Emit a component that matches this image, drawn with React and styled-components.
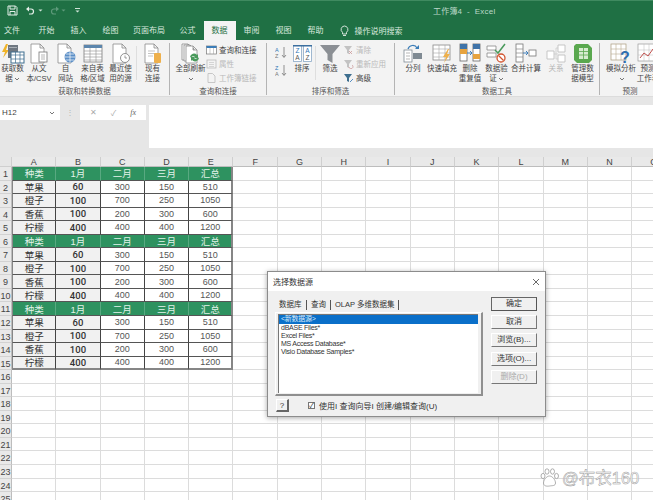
import React from "react";
import styled, { createGlobalStyle } from "styled-components";

const GlobalStyle = createGlobalStyle`
  html, body { margin: 0; padding: 0; height: 100%; overflow: hidden; background: #fff; }
  body { font-family: "Liberation Sans", "Noto Sans CJK SC", sans-serif; }
  * { box-sizing: border-box; }
`;

const GREEN = "#1f7044";
const COLUMNS = "ABCDEFGHIJKLMNO".split("");
const FRUITS = [
  ["苹果", "60", "300", "150", "510"],
  ["橙子", "100", "700", "250", "1050"],
  ["香蕉", "100", "200", "300", "600"],
  ["柠檬", "400", "400", "400", "1200"],
];
const HEADER = ["种类", "1月", "二月", "三月", "汇总"];
const TABLE = [HEADER, ...FRUITS, HEADER, ...FRUITS, HEADER, ...FRUITS];

const Page = styled.div`
  position: relative;
  width: 653px;
  height: 500px;
  overflow: hidden;
  display: flex;
  flex-direction: column;
  background: #fff;
  & > * { flex: none; }
`;

const TitleBar = styled.div`
  height: 20px;
  background: ${GREEN};
  border-top: 1px solid #3f8a60;
  display: flex;
  align-items: center;
  padding-left: 7px;
  color: #cfe3d7;
`;

const Quick = styled.span`
  display: flex;
  flex-direction: column;
  align-items: center;
  gap: 1px;
  margin-left: ${(p) => p.$ml || 0}px;
`;

const QuickBar = styled.span`
  width: 5px;
  height: 1px;
  background: #cfe3d7;
`;

const DocTitle = styled.div`
  margin-left: 353px;
  font-size: 8px;
  color: #bcd8c8;
  letter-spacing: 0.2px;
  white-space: pre;
`;

const TabRow = styled.div`
  height: 20px;
  background: ${GREEN};
  display: flex;
  align-items: flex-end;
  padding-left: 4px;
`;

const Tab = styled.div`
  height: 19px;
  line-height: 19px;
  padding: 0 ${(p) => p.$pad || 8}px;
  font-size: 8px;
  white-space: nowrap;
  color: ${(p) => (p.$active ? GREEN : "#d9e9df")};
  background: ${(p) => (p.$active ? "#f3f3f3" : "transparent")};
  &:first-child { padding: 0 10.5px 0 0; }
`;

const SearchTab = styled.div`
  height: 19px;
  margin-left: 8px;
  display: flex;
  align-items: center;
  gap: 6px;
  font-size: 8px;
  color: #d9e9df;
`;

const Ribbon = styled.div`
  height: 57px;
  background: #f3f3f3;
  display: flex;
  color: #444;
  border-bottom: 1px solid #dcdcdc;
`;

const Group = styled.div`
  width: ${(p) => p.$w}px;
  flex: none;
  display: flex;
  flex-direction: column;
  border-right: 1px solid #b4b4b4;
  margin: 3px 0 1px;
  &:last-child { border-right: none; }
`;

const GroupBody = styled.div`
  flex: 1;
  display: flex;
  padding-left: ${(p) => p.$pad || 0}px;
`;

const GroupLabel = styled.div`
  height: 10px;
  line-height: 14px;
  font-size: 7.5px;
  text-align: center;
  color: #555;
`;

const Tool = styled.div`
  width: ${(p) => p.$w}px;
  flex: none;
  display: flex;
  flex-direction: column;
  align-items: center;
  font-size: 7.5px;
  line-height: 9.5px;
  text-align: center;
  color: ${(p) => (p.$off ? "#b5b5b5" : "#444")};
`;

const ToolIcon = styled.div`
  height: 21px;
  display: flex;
  align-items: center;
  justify-content: center;
`;

const ToolText = styled.div`
  white-space: pre;
`;

const SmallColumn = styled.div`
  width: ${(p) => p.$w}px;
  flex: none;
  display: flex;
  flex-direction: column;
  gap: 3px;
  padding-top: 1px;
`;

const SmallTool = styled.div`
  height: 11px;
  display: flex;
  align-items: center;
  gap: 2px;
  font-size: 7.5px;
  white-space: nowrap;
  color: ${(p) => (p.$off ? "#b9b9b9" : "#444")};
`;

const SortColumn = styled.div`
  width: 18px;
  flex: none;
  display: flex;
  flex-direction: column;
  align-items: center;
  gap: 5px;
  padding-top: 3px;
`;

const FaintRule = styled.div`
  width: 1px;
  height: 34px;
  margin: 3px ${(p) => p.$r || 2}px 0 ${(p) => p.$l || 1}px;
  flex: none;
  background: #dedede;
`;

const FormulaZone = styled.div`
  height: 60px;
  background: #e6e6e6;
  padding-top: 8px;
  display: flex;
  align-items: flex-start;
`;

const NameBox = styled.div`
  width: 60px;
  height: 15px;
  background: #fff;
  display: flex;
  align-items: center;
  justify-content: space-between;
  padding: 0 5px 0 2px;
  font-size: 8px;
  color: #444;
`;

const Grip = styled.div`
  width: 20px;
  height: 15px;
  display: flex;
  align-items: center;
  justify-content: center;
  color: #b5b5b5;
  font-size: 8px;
`;

const FxBox = styled.div`
  width: 66px;
  height: 15px;
  background: #fff;
  display: flex;
  align-items: center;
  justify-content: space-around;
  padding: 0 3px;
  color: #aaa;
  font-size: 8px;
`;

const FxMark = styled.span`
  font-family: "Liberation Serif", serif;
  font-style: italic;
  color: #666;
`;

const FormulaInput = styled.div`
  margin-left: 3px;
  flex: 1;
  height: 43px;
  background: #fff;
`;

const Sheet = styled.div`
  display: grid;
  grid-template-columns: 12px repeat(15, 44.3px);
  grid-template-rows: 10px;
  grid-auto-rows: 13.55px;
`;

const Corner = styled.div`
  background: #e6e6e6;
  border-right: 1px solid #cfcfcf;
  border-bottom: 1px solid #cfcfcf;
`;

const ColHead = styled.div`
  background: #e9e9e9;
  border-right: 1px solid #cfcfcf;
  border-bottom: 1px solid #bdbdbd;
  font-size: 9px;
  line-height: 10px;
  text-align: center;
  color: #444;
`;

const RowHead = styled.div`
  background: #e9e9e9;
  border-right: 1px solid #bdbdbd;
  border-bottom: 1px solid #d2d2d2;
  font-size: 9px;
  line-height: 14px;
  text-align: center;
  color: #444;
  white-space: nowrap;
`;

const Blank = styled.div`
  border-right: 1px solid #dcdcdc;
  border-bottom: 1px solid #dcdcdc;
`;

const Cell = styled.div`
  display: flex;
  align-items: center;
  justify-content: center;
  font-family: ${(p) =>
    p.$kind === "month" ? `Roboto, "Noto Sans CJK SC", sans-serif` : "inherit"};
  font-size: ${(p) => (p.$kind === "value" ? 9 : 9.5)}px;
  font-weight: ${(p) => (p.$kind === "month" ? 500 : 400)};
  color: ${(p) =>
    p.$kind === "head" ? "#e3f3ea" : p.$kind === "value" ? "#555" : "#333"};
  background: ${(p) =>
    p.$kind === "head"
      ? "#2e9260"
      : p.$kind === "value"
      ? "#fff"
      : "#f1f1f1"};
  border-right: ${(p) =>
    p.$right ? "2px solid #868686" : p.$kind === "head" ? "1px solid #59a981" : "1px solid #444"};
  border-bottom: ${(p) =>
    p.$bottom ? "2px solid #868686" : "1px solid #555"};
  border-left: ${(p) => (p.$left ? "1px solid #868686" : "none")};
`;

const Dialog = styled.div`
  position: absolute;
  left: 267px;
  top: 271px;
  width: 279px;
  height: 146px;
  background: #f0f0f0;
  border: 1px solid #8c8c8c;
  box-shadow: 0 1px 5px rgba(0, 0, 0, 0.35);
  display: flex;
  flex-direction: column;
  color: #333;
`;

const DialogTitle = styled.div`
  height: 19px;
  background: #fff;
  display: flex;
  align-items: center;
  justify-content: space-between;
  padding: 0 5px 0 5px;
  font-size: 8px;
`;

const DialogBody = styled.div`
  flex: 1;
  display: flex;
  padding: 6px 0 0 7px;
`;

const DialogLeft = styled.div`
  width: 208px;
  display: flex;
  flex-direction: column;
`;

const DialogTabs = styled.div`
  height: 15px;
  display: flex;
  align-items: center;
  padding-left: 4px;
  font-size: 7.5px;
`;

const DialogTab = styled.div`
  padding: 0 3.5px;
  white-space: nowrap;
  border-right: 1px solid #555;
  height: 10px;
  line-height: 10px;
  margin-right: 1px;
  &:first-child { padding: 0 4px 0 0; }
`;

const Pane = styled.div`
  height: 84px;
  padding: 1px 3px 2px 2px;
  border-top: 1px solid #fff;
  border-left: 1px solid #fff;
  border-right: 2px solid #8f8f8f;
  border-bottom: 2px solid #8f8f8f;
`;

const SourceList = styled.div`
  height: 79px;
  background: #fff;
  border-left: 1px solid #777;
  border-top: 1px solid #777;
  display: flex;
  flex-direction: column;
  font-size: 7px;
  letter-spacing: -0.25px;
  line-height: 8px;
`;

const SourceRow = styled.div`
  padding-left: 2px;
  height: ${(p) => (p.$selected ? 9 : 8)}px;
  white-space: nowrap;
  color: ${(p) => (p.$selected ? "#dbeaf8" : "#333")};
  background: ${(p) => (p.$selected ? "#0a6fc9" : "transparent")};
`;

const DialogFooter = styled.div`
  display: flex;
  align-items: center;
  margin-top: 3px;
  font-size: 8px;
`;

const HelpButton = styled.div`
  width: 13px;
  height: 13px;
  margin-left: 1px;
  border: 1px solid #666;
  border-top-color: #fff;
  border-left-color: #fff;
  border-right-width: 2px;
  border-bottom-width: 2px;
  display: flex;
  align-items: center;
  justify-content: center;
  font-size: 8px;
`;

const CheckBox = styled.div`
  width: 7px;
  height: 7px;
  margin: 0 4px 0 19px;
  background: #fff;
  border: 1px solid #777;
  font-size: 7px;
  line-height: 5px;
  display: flex;
  align-items: center;
  justify-content: center;
`;

const Buttons = styled.div`
  margin-left: 8px;
  width: 46px;
  display: flex;
  flex-direction: column;
  gap: 4.2px;
`;

const Button = styled.div`
  height: 14px;
  text-align: center;
  font-size: 8px;
  line-height: 12px;
  white-space: nowrap;
  color: ${(p) => (p.$off ? "#aaa" : "#333")};
  border: 1px solid #fff;
  border-right: 1.5px solid #777;
  border-bottom: 1.5px solid #777;
  ${(p) => p.$main && "border-color: #666 #555 #555 #666;"}
`;

const Watermark = styled.div`
  position: absolute;
  left: 540px;
  top: 468px;
  display: flex;
  align-items: center;
  gap: 3px;
  font-size: 16.5px;
  line-height: 20px;
  color: rgba(255, 255, 255, 0.85);
  -webkit-text-stroke: 0.5px #9a9a9a;
  white-space: nowrap;
`;

const CaretSvg = styled.svg`
  margin-left: 1px;
`;

const Caret = () => (
  <CaretSvg width="6" height="4" viewBox="0 0 6 4">
    <path d="M1 1l2 2 2-2" fill="none" stroke="#555" strokeWidth="0.8" />
  </CaretSvg>
);

const Doc = ({ x = 3, y = 1, w = 13, h = 19, stroke = "#8a8a8a" }) => (
  <path
    d={`M${x} ${y}h${w - 4}l4 4v${h - 4}h-${w}z M${x + w - 4} ${y}v4h4`}
    fill="#fff"
    stroke={stroke}
    strokeWidth="0.8"
  />
);

const Svg = ({ w = 22, h = 21, children }) => (
  <svg width={w} height={h} viewBox={`0 0 ${w} ${h}`}>
    {children}
  </svg>
);

const GetDataIcon = () => (
  <Svg w={24}>
    <path d="M5 1L1 9h3l-2 6 6-8H5l2-6z" fill="#f0b429" />
    <rect x="7" y="2" width="10" height="13" fill="#6f7780" />
    <rect x="8" y="4" width="8" height="1" fill="#a9afb5" />
    <rect x="10" y="9" width="13" height="11" fill="#fff" stroke="#3f6f8f" />
    <path d="M10 12h13M10 16h13M14.500 9v11M19 9v11" stroke="#3f6f8f" strokeWidth="0.7" />
  </Svg>
);

const TextFileIcon = () => (
  <Svg>
    <Doc />
    <rect x="11" y="9" width="8" height="10" fill="#fff" stroke="#777" strokeWidth="0.8" />
    <path d="M13 12h4M13 14h4M13 16h4" stroke="#999" strokeWidth="0.7" />
  </Svg>
);

const WebIcon = () => (
  <Svg>
    <Doc />
    <circle cx="15" cy="14" r="5.500" fill="#5b8fc7" />
    <path d="M9.500 14h11M15 8.500v11M11 11h8M11 17h8" stroke="#fff" strokeWidth="0.7" />
  </Svg>
);

const TableIcon = () => (
  <Svg>
    <rect x="2" y="2" width="18" height="17" fill="#fff" stroke="#7c7c7c" strokeWidth="0.8" />
    <rect x="2" y="2" width="18" height="3" fill="#5c86ad" />
    <path d="M2 8h18M2 11h18M2 14h18M2 17h18M8 5v14M14 5v14" stroke="#8d8d8d" strokeWidth="0.6" />
  </Svg>
);

const RecentIcon = () => (
  <Svg>
    <Doc />
    <circle cx="15" cy="15" r="4.500" fill="#fff" stroke="#777" strokeWidth="0.8" />
    <path d="M15 12.500V15h2" fill="none" stroke="#777" strokeWidth="0.7" />
  </Svg>
);

const ExistingIcon = () => (
  <Svg>
    <Doc />
    <path d="M6 8h7M6 10.500h7M6 13h5" stroke="#aaa" strokeWidth="0.7" />
    <rect x="12" y="10" width="7" height="10" rx="1" fill="#eeb04c" />
  </Svg>
);

const RefreshIcon = () => (
  <Svg w={24}>
    <Doc x={3} y={1} w={10} h={16} />
    <Doc x={5} y={2} w={10} h={16} />
    <Doc x={7} y={3} w={11} h={17} />
    <path d="M11 14a4 4 0 0 1 7-2l1-1v4h-4l1-1a2.500 2.500 0 0 0-4 .500z" fill="#4a9a5c" />
    <path d="M20 15a4 4 0 0 1-7 2l-1 1v-4h4l-1 1a2.500 2.500 0 0 0 4-.500z" fill="#4a9a5c" />
  </Svg>
);

const QueryIcon = () => (
  <Svg w={11} h={10}>
    <rect x="0.500" y="1" width="10" height="8" fill="#fff" stroke="#777" strokeWidth="0.7" />
    <rect x="0.500" y="1" width="10" height="2" fill="#3b7db8" />
    <path d="M4 3v6M7.500 3v6" stroke="#999" strokeWidth="0.5" />
  </Svg>
);

const PropsIcon = () => (
  <Svg w={11} h={10}>
    <rect x="1" y="1" width="9" height="8" fill="none" stroke="#bbb" strokeWidth="0.8" />
    <path d="M3 3.500h5M3 5.500h5M3 7.500h5" stroke="#c6c6c6" strokeWidth="0.7" />
  </Svg>
);

const LinkDocIcon = () => (
  <Svg w={11} h={10}>
    <path d="M2 .500h4.500l2.500 2.500v6.500H2z" fill="none" stroke="#bbb" strokeWidth="0.8" />
  </Svg>
);

const Letters = ({ top, bottom, down }) => (
  <svg width="12" height="13" viewBox="0 0 12 13">
    <text x="0" y="5.500" fontSize="5.500" fill="#2f75b5" fontFamily="Liberation Sans">{top}</text>
    <text x="0" y="12" fontSize="5.500" fill="#777" fontFamily="Liberation Sans">{bottom}</text>
    <path d={down ? "M9 1v10M7 9l2 2.500L11 9" : "M9 12V2M7 4l2-2.500L11 4"} fill="none" stroke="#666" strokeWidth="0.7" />
  </svg>
);

const SortIcon = () => (
  <svg width="19" height="17" viewBox="0 0 19 17">
    <rect x="0.500" y="0.500" width="8" height="16" fill="#fff" stroke="#8ba9c6" strokeWidth="0.8" />
    <rect x="10.500" y="0.500" width="8" height="16" fill="#fff" stroke="#8ba9c6" strokeWidth="0.8" />
    <rect x="0" y="0" width="19" height="1.500" fill="#3b6f9f" />
    <text x="4.500" y="8" fontSize="6.500" textAnchor="middle" fill="#2f75b5" fontFamily="Liberation Sans">Z</text>
    <text x="4.500" y="15" fontSize="6.500" textAnchor="middle" fill="#555" fontFamily="Liberation Sans">A</text>
    <text x="14.500" y="8" fontSize="6.500" textAnchor="middle" fill="#2f75b5" fontFamily="Liberation Sans">A</text>
    <text x="14.500" y="15" fontSize="6.500" textAnchor="middle" fill="#555" fontFamily="Liberation Sans">Z</text>
  </svg>
);

const FunnelIcon = () => (
  <Svg w={20} h={20}>
    <path d="M0 1h20l-7.500 9v9l-5-3v-6z" fill="#8b8f94" />
  </Svg>
);

const MiniFunnel = ({ color = "#c3c3c3", mark }) => (
  <Svg w={11} h={10}>
    <path d="M1 1h8L6 5v4L4 8V5z" fill={color} />
    <path d={mark} fill="none" stroke={color === "#c3c3c3" ? "#c99" : "#2f75b5"} strokeWidth="0.8" />
  </Svg>
);

const ColumnsIcon = () => (
  <Svg w={20}>
    <rect x="1" y="7" width="8" height="12" fill="#fff" stroke="#7f8a93" strokeWidth="0.8" />
    <rect x="10" y="10" width="9" height="6" fill="#7f8a93" />
    <path d="M3 10h4M3 13h4M3 16h4" stroke="#999" strokeWidth="0.7" />
    <path d="M5 6c1-4 7-5 9-1" fill="none" stroke="#3b7db8" strokeWidth="1.200" />
    <path d="M12 6h4V2z" fill="#3b7db8" />
  </Svg>
);

const FlashIcon = () => (
  <Svg w={20}>
    <rect x="1" y="2" width="17" height="15" fill="#fff" stroke="#888" strokeWidth="0.8" />
    <path d="M1 6h17M1 10h17M1 14h17M7 2v15M13 2v15" stroke="#a5a5a5" strokeWidth="0.6" />
    <path d="M16 6l-5 8h3l-2 6 6-9h-3l2-5z" fill="#eeb04c" />
  </Svg>
);

const DuplicatesIcon = () => (
  <Svg>
    <rect x="1" y="1" width="7" height="17" fill="#fff" stroke="#666" strokeWidth="0.8" />
    <rect x="14" y="1" width="7" height="17" fill="#fff" stroke="#666" strokeWidth="0.8" />
    <rect x="1" y="1" width="7" height="5" fill="#3f73a8" />
    <rect x="1" y="6" width="7" height="5" fill="#e7a33e" />
    <rect x="14" y="1" width="7" height="5" fill="#3f73a8" />
    <rect x="14" y="11" width="7" height="5" fill="#e7a33e" />
    <path d="M8 10h5M11 8l2 2-2 2" fill="none" stroke="#2f75b5" strokeWidth="0.9" />
  </Svg>
);

const ValidateIcon = () => (
  <Svg>
    <path d="M1 3h9v4H1zM1 10h9v4H1z" fill="#fff" stroke="#888" strokeWidth="0.8" />
    <path d="M9 7l3 3 7-9" fill="none" stroke="#4a9a5c" strokeWidth="1.500" />
    <circle cx="15" cy="15" r="4" fill="#fff" stroke="#d2542f" strokeWidth="1.300" />
    <path d="M12.500 12.500l5 5" stroke="#d2542f" strokeWidth="1.300" />
  </Svg>
);

const ConsolidateIcon = () => (
  <Svg>
    <rect x="1" y="1" width="7" height="18" fill="#fff" stroke="#777" strokeWidth="0.8" />
    <path d="M1 6h7M1 10h7M1 14h7" stroke="#888" strokeWidth="0.7" />
    <path d="M8 10h5M11 8l2 2-2 2" fill="none" stroke="#2f75b5" strokeWidth="0.9" />
    <rect x="14" y="7" width="7" height="6" fill="#fff" stroke="#777" strokeWidth="0.8" />
  </Svg>
);

const RelationIcon = () => (
  <Svg w={20}>
    <path d="M1 8h7v8H1zM12 2h7v7h-7zM12 12h7v7h-7z" fill="#fff" stroke="#c1c1c1" strokeWidth="0.9" />
    <path d="M8 11h4M12 5h-2v11h2" fill="none" stroke="#c9c9c9" strokeWidth="0.7" />
  </Svg>
);

const ModelIcon = () => (
  <Svg w={20}>
    <path d="M3 1h12l4 4v12l-3 3H4l-3-3V3z" fill="#5aa84f" />
    <rect x="6" y="5" width="9" height="11" fill="#d7ecd0" />
    <path d="M6 8.500h9M6 12h9M10.500 5v11" stroke="#5aa84f" strokeWidth="0.8" />
  </Svg>
);

const WhatIfIcon = () => (
  <Svg>
    <rect x="1" y="1" width="15" height="16" fill="#fff" stroke="#a99a7c" strokeWidth="0.7" />
    <path d="M1 6h15M1 11h15M6 1v16M11 1v16" stroke="#b9ac92" strokeWidth="0.6" />
    <text x="15" y="20" fontSize="16" fontWeight="700" textAnchor="middle" fill="#2f6fb0" fontFamily="Liberation Sans">?</text>
  </Svg>
);

const ForecastIcon = () => (
  <Svg>
    <rect x="1" y="1" width="17" height="17" fill="#fff" stroke="#999" strokeWidth="0.7" />
    <path d="M1 7h17M1 12h17M7 1v17M12 1v17" stroke="#bbb" strokeWidth="0.5" />
    <path d="M3 15l4-5 4 3 5-7" fill="none" stroke="#c0504d" strokeWidth="1" />
  </Svg>
);

const SaveIcon = () => (
  <svg width="11" height="11" viewBox="0 0 11 11">
    <path d="M1 1h7.500L10 2.500V10H1z" fill="none" stroke="#e4eee8" strokeWidth="1" />
    <path d="M3 1v3h5V1M3 10V6.500h5V10" fill="none" stroke="#e4eee8" strokeWidth="1" />
  </svg>
);

const UndoIcon = () => (
  <svg width="10" height="9" viewBox="0 0 10 9">
    <path d="M2 3h4a2.500 2.500 0 0 1 0 5H4" fill="none" stroke="#e4eee8" strokeWidth="1.200" />
    <path d="M4 .500L1 3l3 2.500z" fill="#e4eee8" />
  </svg>
);

const RedoIcon = () => (
  <svg width="10" height="9" viewBox="0 0 10 9">
    <path d="M8 3H4a2.500 2.500 0 0 0 0 5h2" fill="none" stroke="#5f9a7b" strokeWidth="1.200" />
    <path d="M6 .500L9 3 6 5.500z" fill="#5f9a7b" />
  </svg>
);

const TinyCaret = ({ color = "#cfe3d7" }) => (
  <svg width="5" height="3" viewBox="0 0 5 3">
    <path d="M.500.500h4L2.500 2.500z" fill={color} />
  </svg>
);

const BulbIcon = () => (
  <svg width="9" height="12" viewBox="0 0 9 12">
    <path d="M4.500 1a3.500 3.500 0 0 0-2 6.300V9h4V7.300a3.500 3.500 0 0 0-2-6.300zM3 10.500h3" fill="none" stroke="#e4eee8" strokeWidth="0.9" />
  </svg>
);

const CloseIcon = () => (
  <svg width="8" height="8" viewBox="0 0 8 8">
    <path d="M1 1l6 6M7 1L1 7" stroke="#444" strokeWidth="0.8" />
  </svg>
);

const PawIcon = () => (
  <svg width="19" height="20" viewBox="0 0 19 20">
    <g fill="#fff" stroke="#9a9a9a" strokeWidth="0.8">
      <ellipse cx="3" cy="8" rx="2" ry="2.600" />
      <ellipse cx="7" cy="3.500" rx="2" ry="2.700" />
      <ellipse cx="12.500" cy="3.500" rx="2" ry="2.700" />
      <ellipse cx="16.500" cy="8" rx="2" ry="2.600" />
      <path d="M9.500 8c-3 0-6 4-6 7 0 3 3 3.500 6 3s6 0 6-3-3-7-6-7z" />
    </g>
  </svg>
);

const LargeTool = ({ w, icon, text, caret, off }) => (
  <Tool $w={w} $off={off}>
    <ToolIcon>{icon}</ToolIcon>
    <ToolText>
      {text}
      {caret && <Caret />}
    </ToolText>
  </Tool>
);

const PAGE_TABS = ["文件", "开始", "插入", "绘图", "页面布局", "公式", "数据", "审阅", "视图", "帮助"];
const SOURCES = ["<新数据源>", "dBASE Files*", "Excel Files*", "MS Access Database*", "Visio Database Samples*"];

export default function App() {
  return (
    <Page>
      <GlobalStyle />
      <TitleBar>
        <SaveIcon />
        <Quick $ml={7}><UndoIcon /></Quick>
        <Quick $ml={3}><TinyCaret /></Quick>
        <Quick $ml={7}><RedoIcon /></Quick>
        <Quick $ml={1}><TinyCaret color="#5f9a7b" /></Quick>
        <Quick $ml={9}>
          <QuickBar />
          <TinyCaret />
        </Quick>
        <DocTitle>工作簿4  -  Excel</DocTitle>
      </TitleBar>

      <TabRow>
        {PAGE_TABS.map((name) => (
          <Tab key={name} $active={name === "数据"} $pad={name === "页面布局" ? 6.5 : 8}>
            {name}
          </Tab>
        ))}
        <SearchTab>
          <BulbIcon />
          操作说明搜索
        </SearchTab>
      </TabRow>

      <Ribbon>
        <Group $w={170}>
          <GroupBody>
            <LargeTool w={25} icon={<GetDataIcon />} text={"获取数\n据"} caret />
            <LargeTool w={28} icon={<TextFileIcon />} text={"从文\n本/CSV"} />
            <LargeTool w={25} icon={<WebIcon />} text={"自\n网站"} />
            <LargeTool w={29} icon={<TableIcon />} text={"来自表\n格/区域"} />
            <LargeTool w={27} icon={<RecentIcon />} text={"最近使\n用的源"} />
            <FaintRule $l={2} $r={2} />
            <LargeTool w={27} icon={<ExistingIcon />} text={"现有\n连接"} />
          </GroupBody>
          <GroupLabel>获取和转换数据</GroupLabel>
        </Group>

        <Group $w={97}>
          <GroupBody $pad={5}>
            <LargeTool w={31} icon={<RefreshIcon />} text={"全部刷新\n"} caret />
            <SmallColumn $w={58}>
              <SmallTool><QueryIcon />查询和连接</SmallTool>
              <SmallTool $off><PropsIcon />属性</SmallTool>
              <SmallTool $off><LinkDocIcon />工作簿链接</SmallTool>
            </SmallColumn>
          </GroupBody>
          <GroupLabel>查询和连接</GroupLabel>
        </Group>

        <Group $w={128}>
          <GroupBody $pad={5}>
            <SortColumn>
              <Letters top="A" bottom="Z" down />
              <Letters top="Z" bottom="A" down />
            </SortColumn>
            <LargeTool w={24} icon={<SortIcon />} text={"排序"} />
            <FaintRule $l={1} $r={1} />
            <LargeTool w={26} icon={<FunnelIcon />} text={"筛选"} />
            <SmallColumn $w={50}>
              <SmallTool $off><MiniFunnel mark="M6 6l3 3M9 6l-3 3" />清除</SmallTool>
              <SmallTool $off><MiniFunnel mark="M6 8a2 2 0 1 0 3-2" />重新应用</SmallTool>
              <SmallTool><MiniFunnel color="#3f6f8f" mark="M7 9l3-3" />高级</SmallTool>
            </SmallColumn>
          </GroupBody>
          <GroupLabel>排序和筛选</GroupLabel>
        </Group>

        <Group $w={205}>
          <GroupBody $pad={4}>
            <LargeTool w={28} icon={<ColumnsIcon />} text={"分列"} />
            <LargeTool w={30} icon={<FlashIcon />} text={"快速填充"} />
            <LargeTool w={26} icon={<DuplicatesIcon />} text={"删除\n重复值"} />
            <LargeTool w={27} icon={<ValidateIcon />} text={"数据验\n证"} caret />
            <LargeTool w={32} icon={<ConsolidateIcon />} text={"合并计算"} />
            <LargeTool w={28} icon={<RelationIcon />} text={"关系"} off />
            <LargeTool w={25} icon={<ModelIcon />} text={"管理数\n据模型"} />
          </GroupBody>
          <GroupLabel>数据工具</GroupLabel>
        </Group>

        <Group $w={60}>
          <GroupBody $pad={6}>
            <LargeTool w={30} icon={<WhatIfIcon />} text={"模拟分析\n"} caret />
            <LargeTool w={24} icon={<ForecastIcon />} text={"预测\n工作表"} />
          </GroupBody>
          <GroupLabel>预测</GroupLabel>
        </Group>
      </Ribbon>

      <FormulaZone>
        <NameBox>
          H12
          <Caret />
        </NameBox>
        <Grip>⋮</Grip>
        <FxBox>
          <span>✕</span>
          <span>✓</span>
          <FxMark>fx</FxMark>
        </FxBox>
        <FormulaInput />
      </FormulaZone>

      <Sheet>
        <Corner />
        {COLUMNS.map((col) => (
          <ColHead key={col}>{col}</ColHead>
        ))}
        {Array.from({ length: 25 }, (_, r) => (
          <React.Fragment key={r}>
            <RowHead>{r + 1}</RowHead>
            {COLUMNS.map((col, c) => {
              const row = TABLE[r];
              if (!row || c > 4) return <Blank key={col} />;
              const isHead = row === HEADER;
              const kind = isHead ? "head" : c === 0 ? "label" : c === 1 ? "month" : "value";
              return (
                <Cell key={col} $kind={kind} $left={c === 0} $right={c === 4} $bottom={r === 14}>
                  {row[c]}
                </Cell>
              );
            })}
          </React.Fragment>
        ))}
      </Sheet>

      <Dialog>
        <DialogTitle>
          选择数据源
          <CloseIcon />
        </DialogTitle>
        <DialogBody>
          <DialogLeft>
            <DialogTabs>
              <DialogTab>数据库</DialogTab>
              <DialogTab>查询</DialogTab>
              <DialogTab>OLAP 多维数据集</DialogTab>
            </DialogTabs>
            <Pane>
              <SourceList>
                {SOURCES.map((name, i) => (
                  <SourceRow key={name} $selected={i === 0}>{name}</SourceRow>
                ))}
              </SourceList>
            </Pane>
            <DialogFooter>
              <HelpButton>?</HelpButton>
              <CheckBox>✓</CheckBox>
              使用I 查询向导I 创建/编辑查询(U)
            </DialogFooter>
          </DialogLeft>
          <Buttons>
            <Button $main>确定</Button>
            <Button>取消</Button>
            <Button>浏览(B)...</Button>
            <Button>选项(O)...</Button>
            <Button $off>删除(D)</Button>
          </Buttons>
        </DialogBody>
      </Dialog>

      <Watermark>
        <PawIcon />
        @布衣160
      </Watermark>
    </Page>
  );
}
